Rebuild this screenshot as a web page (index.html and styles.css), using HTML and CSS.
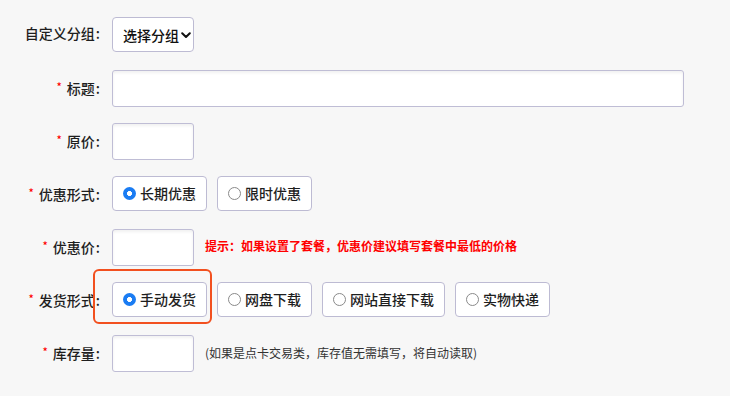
FILE: index.html
```html
<!DOCTYPE html>
<html lang="zh-CN">
<head>
    <meta charset="UTF-8">
    <title>商品设置</title>
    <link rel="stylesheet" href="styles.css">
</head>
<body>
<form class="goods-form" autocomplete="off">
    <div class="row short">
        <label class="label" for="group">自定义分组<span class="colon">:</span></label>
        <div class="select-wrap">
            <select id="group" name="group">
                <option>选择分组</option>
            </select>
            <svg class="chevron" width="10" height="7" viewBox="0 0 10 7"><polyline points="1.2,1.2 5,5 8.8,1.2" fill="none" stroke="#111" stroke-width="2" stroke-linecap="round" stroke-linejoin="round"/></svg>
        </div>
    </div>

    <div class="row">
        <label class="label" for="title"><span class="req">*</span>标题<span class="colon">:</span></label>
        <input type="text" id="title" name="title" class="input wide">
    </div>

    <div class="row">
        <label class="label" for="price"><span class="req">*</span>原价<span class="colon">:</span></label>
        <input type="text" id="price" name="price" class="input">
    </div>

    <div class="row short">
        <span class="label"><span class="req">*</span>优惠形式<span class="colon">:</span></span>
        <div class="options">
            <label class="opt"><input type="radio" name="discount" checked>长期优惠</label>
            <label class="opt"><input type="radio" name="discount">限时优惠</label>
        </div>
    </div>

    <div class="row">
        <label class="label" for="sale"><span class="req">*</span>优惠价<span class="colon">:</span></label>
        <input type="text" id="sale" name="sale" class="input">
        <span class="hint">提示：如果设置了套餐，优惠价建议填写套餐中最低的价格</span>
    </div>

    <div class="row short">
        <span class="label"><span class="req">*</span>发货形式<span class="colon">:</span></span>
        <div class="options">
            <label class="opt marked"><input type="radio" name="ship" checked>手动发货</label>
            <label class="opt"><input type="radio" name="ship">网盘下载</label>
            <label class="opt"><input type="radio" name="ship">网站直接下载</label>
            <label class="opt"><input type="radio" name="ship">实物快递</label>
        </div>
    </div>

    <div class="row">
        <label class="label" for="stock"><span class="req">*</span>库存量<span class="colon">:</span></label>
        <input type="text" id="stock" name="stock" class="input">
        <span class="note">(如果是点卡交易类，库存值无需填写，将自动读取)</span>
    </div>
</form>
</body>
</html>
```

FILE: styles.css
```css
body { margin: 0; background: #f7f7f7; font-family: "Noto Sans CJK SC", "Liberation Sans", sans-serif; color: #222; }
.goods-form { padding-top: 17px; }
.row { display: flex; align-items: center; height: 37px; margin-bottom: 16px; }
.row.short { align-items: flex-start; }
.label { flex: none; box-sizing: border-box; width: 100px; margin-right: 12px; padding-bottom: 2px; text-align: right; font-size: 14px; font-weight: 500; color: #1e1e1e; white-space: nowrap; }
.row.short .label { line-height: 33px; }
.colon { margin-left: 1px; }
.req { color: #f00; font-size: 11px; margin-right: 5px; vertical-align: 3px; }

.select-wrap { position: relative; }
.select-wrap select { appearance: none; -webkit-appearance: none; width: 82px; height: 35px; padding: 0 0 0 10px; border: 1px solid #bdbbd3; border-radius: 4px; background: #fff; font: 500 14px "Noto Sans CJK SC", sans-serif; color: #111; }
.chevron { position: absolute; right: 3px; top: 15px; pointer-events: none; }

.input { box-sizing: border-box; width: 82px; height: 37px; border: 1px solid #bfbdd5; border-radius: 3px; background: #fff; box-shadow: inset 0 2px 3px rgba(0,0,0,0.06); }
.input.wide { width: 572px; }

.options { display: flex; gap: 10px; }
.opt { position: relative; box-sizing: border-box; display: inline-flex; align-items: center; height: 35px; padding: 0 10px 2px; border: 1px solid #bdbbd3; border-radius: 4px; background: #fff; font-size: 14px; font-weight: 500; color: #1e1e1e; }
.opt input { appearance: none; -webkit-appearance: none; box-sizing: border-box; width: 13px; height: 13px; margin: 2px 4px 0 0; border: 1px solid #8a8a8a; border-radius: 50%; background: #fff; }
.opt input:checked { border: none; background: radial-gradient(circle, #fff 0 2.2px, #1a7cf3 2.8px); }
.opt.marked::after { content: ""; position: absolute; top: -14px; right: -6px; bottom: -8px; left: -20px; border: 2px solid #f2501f; border-radius: 6px; }

.hint { margin-left: 11px; padding-bottom: 4px; font-size: 12px; font-weight: bold; color: #f00; }
.note { margin-left: 11px; padding-bottom: 3px; font-size: 12px; color: #333; }
```
